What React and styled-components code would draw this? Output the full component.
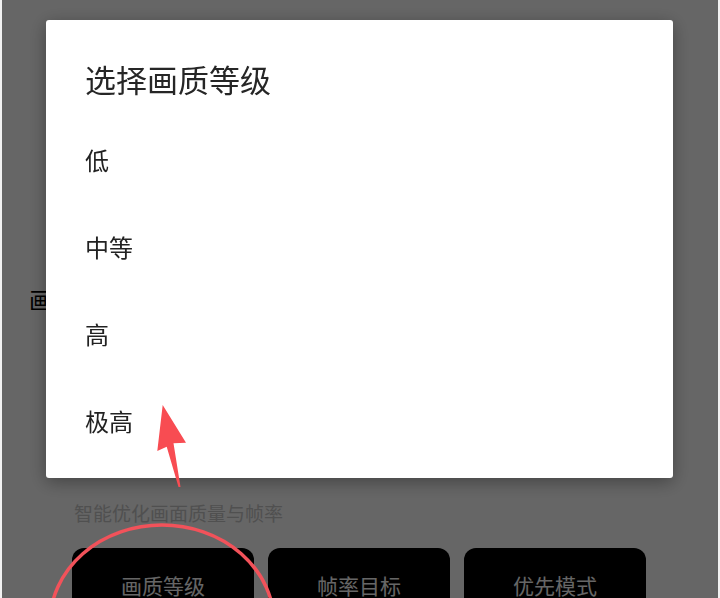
import React from "react";
import styled, { createGlobalStyle } from "styled-components";

const levels = ["低", "中等", "高", "极高"];
const modes = ["画质等级", "帧率目标", "优先模式"];

const App = () => {
  return (
    <>
      <GlobalStyle />
      <Page>
        <SectionLabel>画质设置</SectionLabel>
        <Card>
          <Hint>智能优化画面质量与帧率</Hint>
          <ButtonRow>
            {modes.map((m) => (
              <ModeButton key={m}>{m}</ModeButton>
            ))}
          </ButtonRow>
        </Card>
      </Page>

      <Overlay>
        <Dialog>
          <Title>选择画质等级</Title>
          <List>
            {levels.map((l) => (
              <Item key={l}>{l}</Item>
            ))}
          </List>
        </Dialog>
      </Overlay>

      {/* red annotation drawn on top of the screenshot */}
      <Annotation viewBox="0 0 720 598" width="720" height="598">
        <ellipse
          cx="162"
          cy="623"
          rx="112"
          ry="98"
          fill="none"
          stroke="#f2525a"
          strokeWidth="3.5"
        />
        <polygon
          points="162.7,405 186,442.7 173.5,443.3 180.5,487 178.5,487 166.7,446.7 157.3,451"
          fill="#f84c52"
        />
      </Annotation>
    </>
  );
};

//styled components
const GlobalStyle = createGlobalStyle`
  html, body {
    margin: 0;
    padding: 0;
    background: #f2f2f2;
    overflow: hidden;
  }
  * {
    box-sizing: border-box;
  }
`;

const Page = styled.div`
  height: 598px;
  margin: 0 2px;
  padding: 284px 0 0 27px;
  background: #ffffff;
  overflow: hidden;
  font-family: "Noto Sans CJK SC", "Noto Sans", sans-serif;
`;

const SectionLabel = styled.div`
  font-size: 23px;
  line-height: 30px;
  color: #000;
`;

const Card = styled.div`
  margin-top: 186px;
  padding-left: 43px;
`;

const Hint = styled.div`
  padding-left: 2px;
  font-size: 19px;
  line-height: 26px;
  color: #c8c8c8;
`;

const ButtonRow = styled.div`
  display: flex;
  gap: 14px;
  margin-top: 22px;
`;

const ModeButton = styled.div`
  width: 182px;
  height: 74px;
  border-radius: 12px;
  background: #000;
  color: #fff;
  font-size: 21px;
  display: flex;
  align-items: center;
  justify-content: center;
`;

const Overlay = styled.div`
  position: fixed;
  top: 0;
  bottom: 0;
  left: 2px;
  right: 2px;
  background: rgba(0, 0, 0, 0.6);
`;

const Dialog = styled.div`
  position: absolute;
  left: 44px;
  top: 20px;
  width: 627px;
  height: 458px;
  background: #fff;
  border-radius: 3px;
  box-shadow: 0 4px 18px rgba(0, 0, 0, 0.35);
  padding: 39px 0 14px 39px;
  font-family: "Noto Sans CJK SC", "Noto Sans", sans-serif;
  color: #262626;
`;

const Title = styled.div`
  font-size: 31px;
  line-height: 40px;
  margin-bottom: 17px;
`;

const List = styled.div`
  display: flex;
  flex-direction: column;
`;

const Item = styled.div`
  height: 87px;
  display: flex;
  align-items: center;
  font-size: 24px;
  color: #222;
`;

const Annotation = styled.svg`
  position: fixed;
  top: 0;
  left: 0;
  pointer-events: none;
`;

export default App;
